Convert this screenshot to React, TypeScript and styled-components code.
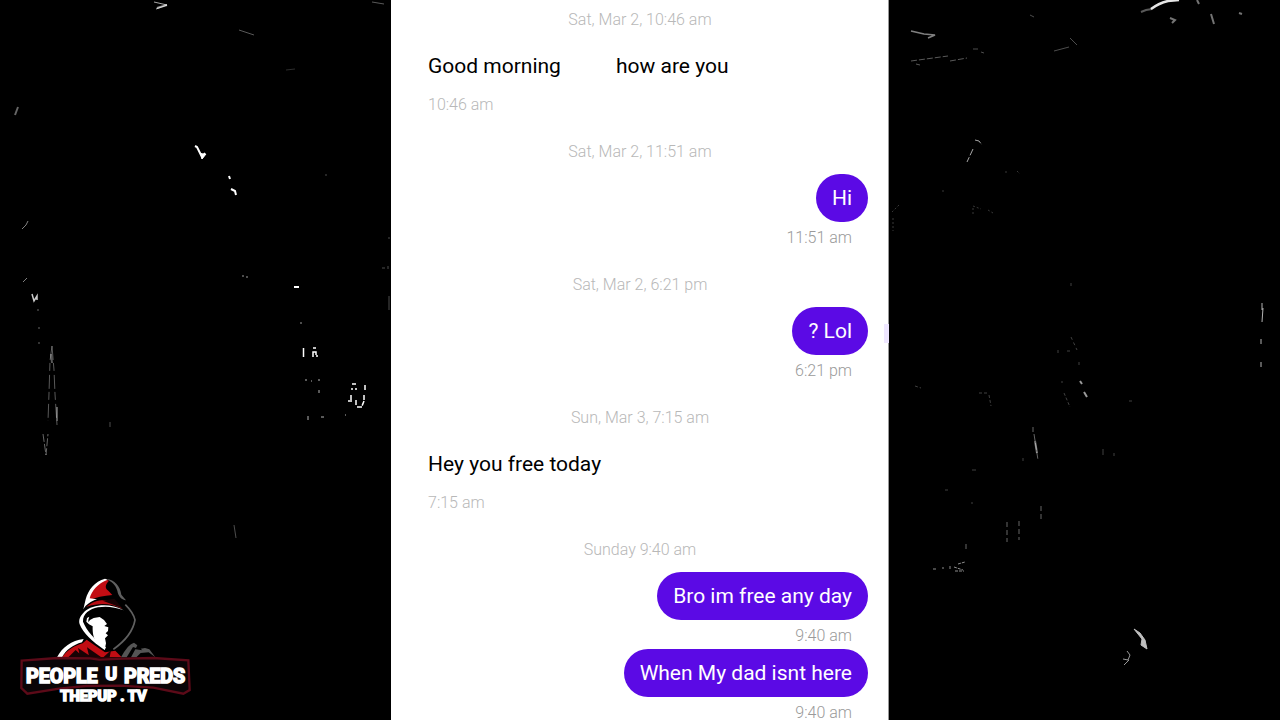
import React from "react";
import styled, { createGlobalStyle } from "styled-components";

const GlobalStyle = createGlobalStyle`
  * { box-sizing: border-box; }
  body { margin: 0; background: #000; }
`;

const Page = styled.main`
  display: grid;
  grid-template-columns: minmax(0, 1fr) minmax(0, 498px) minmax(0, 1fr);
  height: 100vh;
  overflow: hidden;
  background: #000;
  font-family: Roboto, "Liberation Sans", sans-serif;
`;

const SidePanel = styled.aside`
  position: relative;
  display: flex;
  align-items: flex-end;
  overflow: hidden;
  padding-left: 10px;
`;

const Specks = styled.svg`
  position: absolute;
  inset: 0;
  width: 100%;
  height: 100%;
  fill: none;
  stroke: #fff;
`;

const Logo = styled.svg`
  position: relative;
  flex: none;
  width: 190px;
  height: 150px;
`;

const LogoText = styled.text`
  font-family: Roboto, "Liberation Sans", sans-serif;
  font-weight: 700;
  fill: #fff;
  stroke: #fff;
  stroke-width: 5px;
`;

const Feed = styled.section`
  position: relative;
  display: flex;
  flex-direction: column;
  gap: 23px;
  padding: 9px 21px 0;
  background: #fff;
  overflow: hidden;
  box-shadow: inset -1px 0 #999;
`;

const Group = styled.div`
  display: flex;
  flex-direction: column;
`;

const DateLine = styled.time`
  padding: 1px 0 12px;
  text-align: center;
  font-size: 16px;
  font-weight: 300;
  line-height: 20px;
  color: #b8b8b8;
`;

const Message = styled.article<{ $own?: boolean }>`
  display: flex;
  flex-direction: column;
  align-items: ${(p) => (p.$own ? "flex-end" : "flex-start")};
`;

const Bubble = styled.p<{ $own?: boolean }>`
  display: flex;
  align-items: center;
  gap: 55px;
  height: ${(p) => (p.$own ? 48 : 47)}px;
  margin: 0;
  padding: 0 16px;
  border-radius: 24px;
  background: ${(p) => (p.$own ? "#5b0ae5" : "transparent")};
  color: ${(p) => (p.$own ? "#fff" : "#000")};
  font-size: 21px;
  line-height: 24px;
`;

const Stamp = styled.time<{ $own?: boolean }>`
  padding: 6px 16px 3px;
  font-size: 16px;
  font-weight: 300;
  line-height: 20px;
  color: ${(p) => (p.$own ? "#9a9a9a" : "#b8b8b8")};
`;

const EdgeMark = styled.span`
  position: absolute;
  top: 324px;
  right: 0;
  width: 5px;
  height: 19px;
  background: #eee6ff;
`;

type Entry = { parts: string[]; time: string; own?: boolean };

const groups: { date: string; messages: Entry[] }[] = [
  { date: "Sat, Mar 2, 10:46 am", messages: [{ parts: ["Good morning", "how are you"], time: "10:46 am" }] },
  { date: "Sat, Mar 2, 11:51 am", messages: [{ parts: ["Hi"], time: "11:51 am", own: true }] },
  { date: "Sat, Mar 2, 6:21 pm", messages: [{ parts: ["? Lol"], time: "6:21 pm", own: true }] },
  { date: "Sun, Mar 3, 7:15 am", messages: [{ parts: ["Hey you free today"], time: "7:15 am" }] },
  {
    date: "Sunday 9:40 am",
    messages: [
      { parts: ["Bro im free any day"], time: "9:40 am", own: true },
      { parts: ["When My dad isnt here"], time: "9:40 am", own: true },
    ],
  },
];

const LeftSpecks = () => (
  <Specks viewBox="0 0 391 720" preserveAspectRatio="xMinYMin meet" aria-hidden="true">
    <path d="M154 2L167 5L156 9" strokeWidth="1" opacity=".65" />
    <path d="M157 8L167 5" strokeWidth="2" opacity=".6" />
    <path d="M239 30L245 32L254 35M372 2L384 4" opacity=".35" />
    <path d="M286 70L295 69" opacity=".18" />
    <path d="M18 107L15 115" strokeWidth="2" opacity=".4" />
    <path d="M195 146L197 147L202 157L205 153" strokeWidth="2" />
    <path d="M201 153L202 159L206 154" fill="#fff" />
    <path d="M229 176L230 179M231 189L235 191L236 195" strokeWidth="2" />
    <path d="M28 221L26 225L22 229M23 282L27 278" opacity=".5" />
    <path d="M32 294L34 301L37 296L37 300" strokeWidth="1.5" opacity=".8" />
    <path d="M38 309V311M39 327V329M39 342V344" opacity=".4" />
    <path d="M52 346L50 361L49 393L48 421M52 346L54 370L55 394L57 425" opacity=".35" strokeDasharray="14 3 8 4" />
    <path d="M51 354L52 363M57 407L57 421" strokeWidth="2" opacity=".35" />
    <path d="M43 434L46 455L48 434" opacity=".4" strokeDasharray="8 2" />
    <path d="M242 276H244M246 277H248M300 323H302" opacity=".6" />
    <path d="M294 287H299" strokeWidth="2" />
    <path d="M303.500 348V357M313 348H316M313 355V352H316V355M312 356H314M316 356H318" strokeWidth="1.500" />
    <path d="M305 380H307M311 381H312M318 380H320M319 390V393M308 416V420M321 417H324M345 415H346" opacity=".7" />
    <path d="M352 384H356M365 385V390M351 389H353M355 389H357M351 395V400M348 401H352M356 400V405M364 395V401L362 406M357 407H362" strokeWidth="1.500" strokeDasharray="5 1" />
    <path d="M234 525L236 538M110 422V427M325 175H327M382 268H385M388 266V269M389 296V310M388 238H390" opacity=".3" />
  </Specks>
);

const RightSpecks = () => (
  <Specks viewBox="0 0 391 720" preserveAspectRatio="xMinYMin meet" aria-hidden="true">
    <path d="M252 12L257 10L263 9" opacity=".35" strokeWidth="2" />
    <path d="M262 9Q270 3 279 1L290 0" strokeWidth="2.500" opacity=".9" />
    <path d="M308 0L310 4M281 18L286 20L283 23M322 14L325 24M350 13L353 14" strokeWidth="2" opacity=".45" />
    <path d="M22 31L35 34L46 35L39 38" strokeWidth="1.500" opacity=".5" />
    <path d="M22 61L59 56M61 61L78 58M27 64L31 65" opacity=".35" strokeDasharray="6 2" />
    <path d="M84 49H89M92 52L95 53M141 15L145 17M165 51L180 47M181 38L188 45" opacity=".3" />
    <path d="M86 140L90 141L93 145M84 149L78 162" opacity=".65" strokeDasharray="7 2" />
    <path d="M54 190V194M10 205L3 212M4 218V231M84 214V206L92 209M99 210L104 213M116 172H120M128 171L131 174" opacity=".22" strokeDasharray="2 2" />
    <path d="M182 283V287M182 337L188 350M169 350V356M178 351H181M190 362V367" opacity=".25" strokeDasharray="3 3" />
    <path d="M373 303V310M374 308L373 322M372 339V344M372 362V367" opacity=".7" />
    <path d="M191 381L193 384M195 392L198 397" strokeWidth="2" opacity=".6" />
    <path d="M172 382H174M175 393L181 407M90 393H98M100 395L102 406M26 386L32 388" opacity=".25" strokeDasharray="3 2" />
    <path d="M144 427V432M145 434L149 460" opacity=".4" strokeDasharray="7 2" />
    <path d="M146 441L148 453" strokeWidth="2" opacity=".45" />
    <path d="M134 458V461M214 449V455M225 453V456M240 401H243M83 470H87M56 490H59M82 503H84" opacity=".25" />
    <path d="M118 522V542M130 521V540M152 506V519M77 544V550" opacity=".4" strokeDasharray="5 3" />
    <path d="M44 569H48M53 568H55M61 566V570M65 567L74 570M66 571H75M69 564L76 562" opacity=".55" strokeDasharray="3 1" />
    <path d="M245 629L251 633L256 640L258 649L252 645L253 639Z" fill="#fff" strokeWidth="1" opacity=".75" />
    <path d="M238 651L241 655L239 660L234 659M240 660L235 665" opacity=".6" />
  </Specks>
);

const HoodLogo = () => (
  <Logo viewBox="0 0 570 450" role="img" aria-label="People U Preds, thepup.tv">
    <g transform="translate(132 12)">
      <path d="M101 80C104 55 122 27 154 16L165 20C153 32 152 43 163 50L175 63C150 65 125 70 101 80Z" fill="#c20d13" />
      <path d="M96 99C122 76 151 75 183 83L205 104C172 90 143 84 96 99Z" fill="#b80d13" />
      <path d="M146 80L181 74L205 103L174 91Z" fill="#180204" />
      <path d="M88 106L95 76C103 46 122 23 153 14L161 17C132 28 113 49 107 73L129 76C110 82 97 91 88 106Z" fill="#fff" />
      <path d="M158 15C181 17 199 37 202 62L216 79C202 77 192 65 190 50C184 31 173 24 158 15Z" fill="#606060" />
      <path d="M214 92Q238 116 243 138C237 173 209 204 178 226" fill="none" stroke="#606060" strokeWidth="5" />
      <path d="M209 109C169 86 116 90 91 113C78 127 73 137 77 151C87 176 115 204 152 228L156 220C121 197 98 170 87 143C86 119 107 105 132 100C159 96 182 99 209 109Z" fill="#fff" />
      <path d="M106 128L99 132L97 143L105 151L116 157C115 178 119 196 130 208L152 227L156 208L153 193L162 184L155 178L162 171L163 160L151 156L159 150L150 138L137 129L119 132L108 138L103 145L103 137Z" fill="#fff" />
      <path d="M24 250C40 228 61 215 86 208L98 197L125 216L153 235L184 230L203 250Z" fill="#c20d13" />
      <path d="M9 250C25 219 52 200 89 195L84 205C56 213 37 227 24 250Z" fill="#fff" />
      <path d="M43 250L65 228L88 250ZM79 250L72 222L114 250ZM106 250L99 220L142 250ZM148 250L171 229L167 250Z" fill="#180204" />
      <path d="M201 250Q222 210 240 206L250 214L246 222L237 219L218 250ZM231 250L244 226L265 229L260 224L273 222L286 226L304 250L284 235L260 237L247 250Z" fill="#555" />
    </g>
    <path d="M35 272L143 264L240 265L268 269L340 266L430 264L535 271L539 360L520 371L430 353L330 347L228 348L147 356L52 371L34 354Z" fill="#0a0507" stroke="#5c0a18" strokeWidth="7" />
    <LogoText x="48" y="340" fontSize="59">PEOPLE</LogoText>
    <LogoText x="286" y="329" fontSize="54">U</LogoText>
    <LogoText x="342" y="340" fontSize="59">PREDS</LogoText>
    <LogoText x="151" y="394" fontSize="44">THEPUP . TV</LogoText>
  </Logo>
);

export default function App() {
  return (
    <>
      <GlobalStyle />
      <Page>
        <SidePanel>
          <LeftSpecks />
          <HoodLogo />
        </SidePanel>
        <Feed aria-label="Conversation">
          {groups.map((group) => (
            <Group key={group.date}>
              <DateLine>{group.date}</DateLine>
              {group.messages.map((m) => (
                <Message key={m.parts[0]} $own={m.own}>
                  <Bubble $own={m.own}>
                    {m.parts.map((part) => (
                      <span key={part}>{part}</span>
                    ))}
                  </Bubble>
                  <Stamp $own={m.own}>{m.time}</Stamp>
                </Message>
              ))}
            </Group>
          ))}
          <EdgeMark />
        </Feed>
        <SidePanel>
          <RightSpecks />
        </SidePanel>
      </Page>
    </>
  );
}
